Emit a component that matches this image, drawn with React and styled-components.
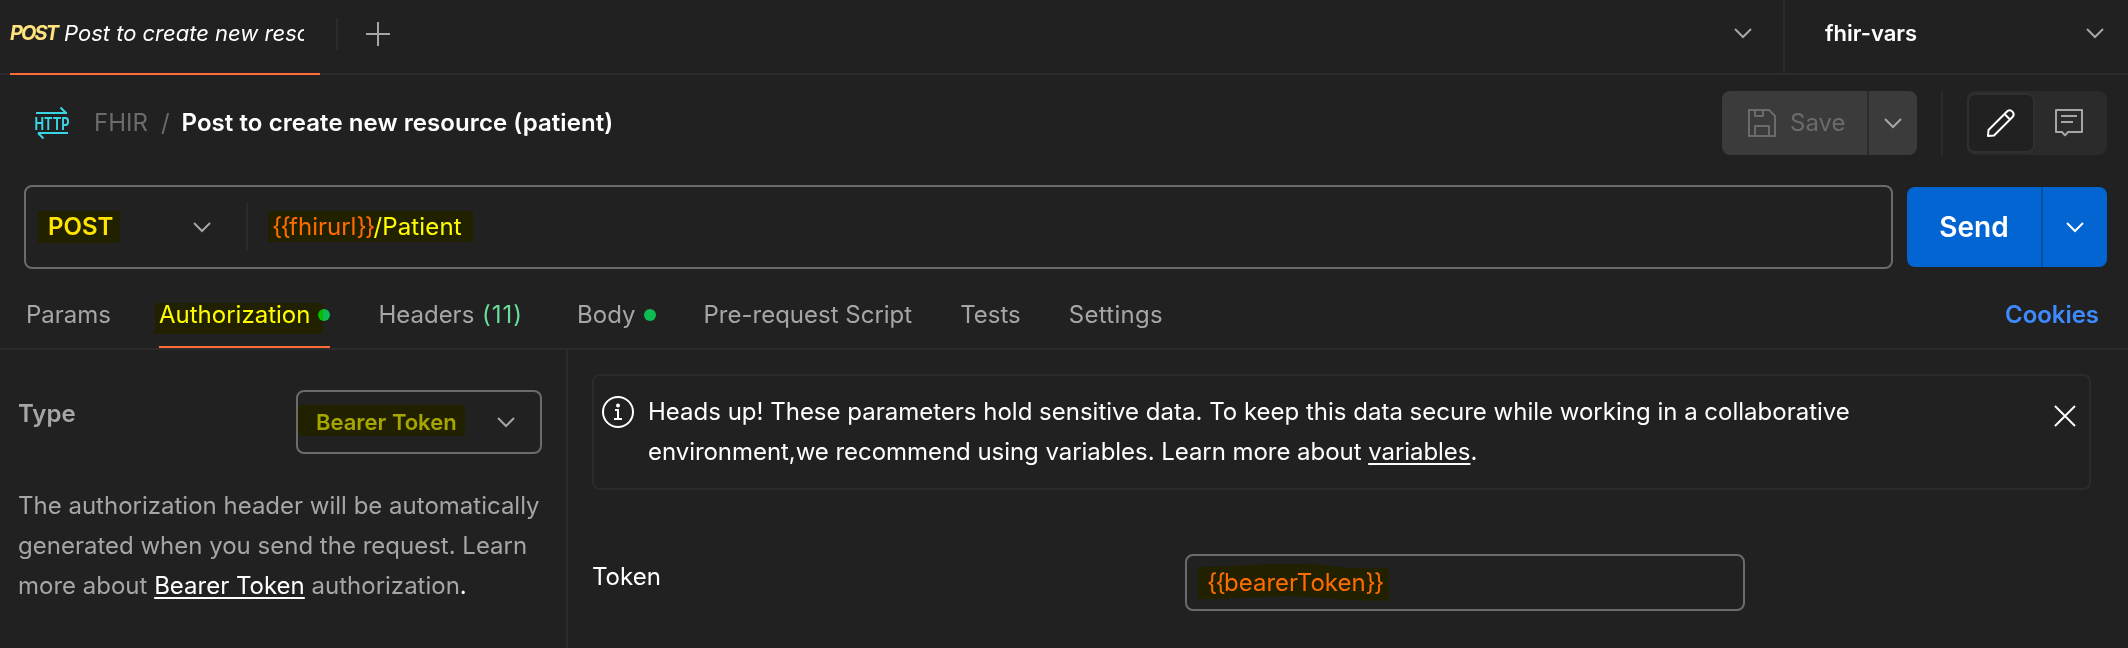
import React from "react";
import styled, { createGlobalStyle, css } from "styled-components";

const Global = createGlobalStyle`
  * { box-sizing: border-box; }
  body {
    margin: 0;
    background: #212121;
    color: #fff;
    font-family: Inter, "Liberation Sans", sans-serif;
    font-size: 24px;
    line-height: 40px;
  }
`;

const Page = styled.div`
  width: 2128px;
  height: 648px;
  overflow: hidden;
  display: flex;
  flex-direction: column;
  background: #212121;
`;

const Row = styled.div`
  display: flex;
  align-items: center;
`;

const Spacer = styled.div`
  flex: 1;
`;

const VLine = styled.div`
  width: 2px;
  height: ${(p) => p.$h}px;
  background: #2b2b2b;
  flex: none;
`;

/* yellow marker laid over the text it wraps */
const Marker = styled.span`
  position: relative;
  white-space: nowrap;
  &::after {
    content: "";
    position: absolute;
    inset: ${(p) => p.$inset};
    background: #ff0;
    mix-blend-mode: multiply;
    clip-path: ${(p) => p.$clip || "none"};
  }
`;

const TabStrip = styled(Row)`
  height: 75px;
  flex: none;
  padding-bottom: 5px;
  border-bottom: 2px solid #2b2b2b;
`;

const RequestTab = styled.div`
  width: 310px;
  height: 75px;
  margin: 7px 16px 0 10px;
  padding: 0 16px 7px 0;
  border-bottom: 2px solid #ff6c37;
  display: flex;
  align-items: center;
  font-style: italic;
  font-size: 22px;
`;

const TabMethod = styled.span`
  width: 54px;
  flex: none;
  font-size: 20px;
  font-weight: 700;
  color: #ffe47e;
  letter-spacing: -1.9px;
`;

const TabTitle = styled.span`
  flex: 1;
  overflow: hidden;
  white-space: nowrap;
`;

const PlusIcon = styled.svg`
  margin-left: 28px;
`;

const EnvPicker = styled(Row)`
  width: 345px;
  height: 73px;
  margin-top: 5px;
  border-left: 2px solid #2b2b2b;
  padding: 0 23px 7px 40px;
  justify-content: space-between;
  font-size: 22px;
  font-weight: 600;
`;

const TabMenu = styled(Row)`
  height: 73px;
  margin-top: 5px;
  padding: 0 30px 7px 0;
`;

const TitleBar = styled(Row)`
  height: 110px;
  flex: none;
  padding: 0 21px 14px 34px;
`;

const Crumb = styled.span`
  color: ${(p) => (p.$active ? "#fff" : "#6b6b6b")};
  font-weight: ${(p) => (p.$active ? 600 : 400)};
  letter-spacing: ${(p) => (p.$active ? 0.07 : 0)}px;
  margin-left: ${(p) => p.$gap}px;
  white-space: nowrap;
`;

const SaveGroup = styled.div`
  display: flex;
  height: 64px;
  margin-right: 24px;
  border-radius: 8px;
  overflow: hidden;
  background: #3b3b3b;
  color: #6b6b6b;
`;

const SaveButton = styled(Row)`
  width: 145px;
  padding-left: 26px;
  gap: 14px;
`;

const SplitArrow = styled(Row)`
  width: ${(p) => p.$w}px;
  border-left: 2px solid ${(p) => p.$line};
  justify-content: center;
`;

const ToggleGroup = styled.div`
  display: flex;
  width: 140px;
  height: 64px;
  margin-left: 24px;
  border-radius: 8px;
  background: #2b2b2b;
`;

const ToggleItem = styled(Row)`
  width: 68px;
  height: 64px;
  justify-content: center;
  ${(p) =>
    p.$on &&
    css`
      height: 60px;
      margin-top: 2px;
      border-radius: 8px;
      background: #212121;
      border: 2px solid #303030;
    `}
`;

const UrlRow = styled.div`
  display: flex;
  height: 84px;
  flex: none;
  padding: 0 21px 0 24px;
  gap: 14px;
  align-items: center;
`;

const UrlBox = styled(Row)`
  width: 1869px;
  height: 84px;
  border: 2px solid #6b6b6b;
  border-radius: 8px;
  padding-left: 22px;
`;

const MethodPicker = styled(Row)`
  width: 198px;
  padding-right: 34px;
  justify-content: space-between;
  color: #ffe47e;
  font-weight: 600;
`;

const UrlText = styled.div`
  margin-left: 24px;
`;

const Variable = styled.span`
  color: #ff6c37;
`;

const Braces = styled.span`
  letter-spacing: -1.7px;
`;

const UrlPath = styled.span`
  letter-spacing: 0.15px;
`;

const SendGroup = styled.div`
  display: flex;
  width: 200px;
  height: 80px;
  border-radius: 8px;
  overflow: hidden;
  background: #0265d2;
`;

const SendButton = styled(Row)`
  width: 134px;
  justify-content: center;
  font-size: 28px;
  font-weight: 600;
`;

const Tabs = styled.div`
  display: flex;
  height: 81px;
  flex: none;
  padding: 0 29px 0 26px;
  gap: 48px;
  border-bottom: 2px solid #2b2b2b;
`;

const Tab = styled.div`
  display: flex;
  align-items: center;
  height: 79px;
  padding-top: 14px;
  color: ${(p) => (p.$active ? "#fff" : "#a6a6a6")};
  border-bottom: 2px solid ${(p) => (p.$active ? "#ff6c37" : "transparent")};
  letter-spacing: ${(p) => p.$track || 0}px;
  white-space: pre;
`;

const Count = styled.span`
  margin: 0 6px 0 1px;
  color: #6bdd9a;
  letter-spacing: 1px;
`;

const Dot = styled.span`
  width: 12px;
  height: 12px;
  margin-left: 8px;
  border-radius: 50%;
  background: #0cbb52;
`;

const CookiesLink = styled(Tab)`
  margin-left: auto;
  color: #3d8bff;
  font-weight: 600;
  letter-spacing: -0.05px;
`;

const Body = styled.div`
  flex: 1;
  display: flex;
`;

const Side = styled.aside`
  width: 568px;
  border-right: 2px solid #2b2b2b;
  padding: 40px 0 0 18px;
  color: #a6a6a6;
`;

const TypeRow = styled.div`
  display: flex;
  justify-content: space-between;
  width: 524px;
  font-weight: 600;
`;

const TypeLabel = styled.div`
  padding-top: 4px;
`;

const Select = styled(Row)`
  width: 246px;
  height: 64px;
  border: 2px solid #6b6b6b;
  border-radius: 8px;
  padding: 0 24px 0 18px;
  justify-content: space-between;
  font-size: 22px;
`;

const Hint = styled.p`
  margin: 32px 0 0;
  white-space: nowrap;
`;

const Link = styled.a`
  color: #fff;
  text-decoration: underline;
  text-decoration-thickness: 2px;
  text-underline-offset: 3px;
  text-decoration-skip-ink: none;
`;

const White = styled.span`
  color: #fff;
`;

const Main = styled.main`
  flex: 1;
  padding: 24px 37px 0 24px;
`;

const Notice = styled.div`
  display: flex;
  height: 116px;
  border: 2px solid #2b2b2b;
  border-radius: 8px;
  padding: 16px 12px 0 8px;
`;

const NoticeText = styled.div`
  flex: 1;
  margin-left: 14px;
`;

const NoticeLine = styled.div`
  letter-spacing: ${(p) => p.$track || 0}px;
  white-space: nowrap;
`;

const NoticeIcon = styled.svg`
  margin-top: 4px;
  flex: none;
`;

const CloseIcon = styled.svg`
  margin-top: 12px;
  flex: none;
`;

const TokenRow = styled.div`
  display: flex;
  margin-top: 64px;
`;

const TokenLabel = styled.div`
  width: 593px;
  padding-top: 3px;
`;

const TokenInput = styled(Row)`
  width: 560px;
  height: 57px;
  border: 2px solid #6b6b6b;
  border-radius: 8px;
  padding-left: 20px;
`;

const Chevron = ({ color = "#a6a6a6" }) => (
  <svg width="20" height="12" viewBox="0 0 20 12" fill="none" stroke={color} strokeWidth="2">
    <path d="M2 2l8 8 8-8" />
  </svg>
);

const HttpIcon = () => (
  <svg
    width="36"
    height="36"
    viewBox="0 0 36 36"
    overflow="visible"
    fill="none"
    stroke="#3ad4e4"
    strokeWidth="2"
  >
    <path d="M2 8h31M26.500 2.500L32 8" />
    <path d="M34 28H4M9.500 33.500L4 28" />
    <text
      x="0.500"
      y="24.700"
      textLength="35"
      lengthAdjust="spacingAndGlyphs"
      fontSize="17"
      fontWeight="700"
      fill="#3ad4e4"
      stroke="none"
    >
      HTTP
    </text>
  </svg>
);

const SaveIcon = () => (
  <svg width="28" height="28" viewBox="0 0 28 28" fill="none" stroke="#6b6b6b" strokeWidth="2" strokeLinejoin="round">
    <path d="M1 1h20l6 6v20H1z" />
    <path d="M7 27V17h14v10M7 1v6h8V1" />
  </svg>
);

const PencilIcon = () => (
  <svg width="30" height="30" viewBox="0 0 30 30" fill="none" stroke="#fff" strokeWidth="2" strokeLinejoin="round">
    <path d="M2 28l.5-6L21.500 3a4 4 0 0 1 5.500 5.500L8 27.500z" />
    <path d="M18.500 6l5.500 5.500" />
  </svg>
);

const CommentIcon = () => (
  <svg width="28" height="28" viewBox="0 0 28 28" fill="none" stroke="#a6a6a6" strokeWidth="2" strokeLinejoin="round">
    <path d="M1 1h26v22H13l-3 3.300L7 23H1z" />
    <path d="M6 7h16M6 13h12" />
  </svg>
);

const VariableName = ({ name }) => (
  <Variable>
    <Braces>{"{{"}</Braces>
    {name}
    <Braces>{"}}"}</Braces>
  </Variable>
);

export default function App() {
  return (
    <Page>
      <Global />
      <TabStrip>
        <RequestTab>
          <TabMethod>POST</TabMethod>
          <TabTitle>Post to create new resource (patient)</TabTitle>
        </RequestTab>
        <VLine $h={32} />
        <PlusIcon width="24" height="24" viewBox="0 0 24 24" stroke="#a6a6a6" strokeWidth="2">
          <path d="M0 12h24M12 0v24" />
        </PlusIcon>
        <Spacer />
        <TabMenu>
          <Chevron />
        </TabMenu>
        <EnvPicker>
          fhir-vars
          <Chevron />
        </EnvPicker>
      </TabStrip>

      <TitleBar>
        <HttpIcon />
        <Crumb $gap={24}>FHIR</Crumb>
        <Crumb $gap={13}>/</Crumb>
        <Crumb $gap={12} $active>
          Post to create new resource (patient)
        </Crumb>
        <Spacer />
        <SaveGroup>
          <SaveButton>
            <SaveIcon />
            Save
          </SaveButton>
          <SplitArrow $w={50} $line="#2b2b2b">
            <Chevron />
          </SplitArrow>
        </SaveGroup>
        <VLine $h={64} />
        <ToggleGroup>
          <ToggleItem $on>
            <PencilIcon />
          </ToggleItem>
          <ToggleItem>
            <CommentIcon />
          </ToggleItem>
        </ToggleGroup>
      </TitleBar>

      <UrlRow>
        <UrlBox>
          <MethodPicker>
            <Marker $inset="4px -7px 4px -10px">POST</Marker>
            <Chevron />
          </MethodPicker>
          <VLine $h={48} />
          <UrlText>
            <Marker $inset="-1px -11px -1px -4px">
              <VariableName name="fhirurl" />
              <UrlPath>/Patient</UrlPath>
            </Marker>
          </UrlText>
        </UrlBox>
        <SendGroup>
          <SendButton>Send</SendButton>
          <SplitArrow $w={66} $line="#0150a8">
            <Chevron color="#fff" />
          </SplitArrow>
        </SendGroup>
      </UrlRow>

      <Tabs>
        <Tab>Params</Tab>
        <Tab $active>
          <Marker $inset="8px -13px 1px -4px">Authorization</Marker>
          <Dot />
        </Tab>
        <Tab>
          Headers <Count>(11)</Count>
        </Tab>
        <Tab>
          Body
          <Dot />
        </Tab>
        <Tab>Pre-request Script</Tab>
        <Tab>Tests</Tab>
        <Tab $track={0.3}>Settings</Tab>
        <CookiesLink>Cookies</CookiesLink>
      </Tabs>

      <Body>
        <Side>
          <TypeRow>
            <TypeLabel>Type</TypeLabel>
            <Select>
              <Marker $inset="3px -8px 6px -18px">Bearer Token</Marker>
              <Chevron />
            </Select>
          </TypeRow>
          <Hint>
            The authorization header will be automatically
            <br />
            generated when you send the request. Learn
            <br />
            more about <Link>Bearer Token</Link> authorization<White>.</White>
          </Hint>
        </Side>
        <Main>
          <Notice>
            <NoticeIcon width="32" height="32" viewBox="0 0 32 32" fill="none" stroke="#fff" strokeWidth="2">
              <circle cx="16" cy="16" r="15" />
              <path d="M13 14h3v9M12 23h8" />
              <circle cx="16" cy="9.500" r="1" fill="#fff" />
            </NoticeIcon>
            <NoticeText>
              <NoticeLine>
                Heads up! These parameters hold sensitive data. To keep this data secure while working in a collaborative
              </NoticeLine>
              <NoticeLine $track={-0.05}>
                environment,we recommend using variables. Learn more about <Link>variables</Link>.
              </NoticeLine>
            </NoticeText>
            <CloseIcon width="24" height="24" viewBox="0 0 24 24" stroke="#fff" strokeWidth="2">
              <path d="M2 2l20 20M22 2L2 22" />
            </CloseIcon>
          </Notice>
          <TokenRow>
            <TokenLabel>Token</TokenLabel>
            <TokenInput>
              <Marker
                $inset="1px -6px 2px -9px"
                $clip="polygon(0 10%, 18% 7%, 40% 0, 60% 2%, 82% 13%, 100% 13%, 100% 100%, 80% 99%, 60% 91%, 45% 88%, 20% 94%, 0 97%)"
              >
                <VariableName name="bearerToken" />
              </Marker>
            </TokenInput>
          </TokenRow>
        </Main>
      </Body>
    </Page>
  );
}
